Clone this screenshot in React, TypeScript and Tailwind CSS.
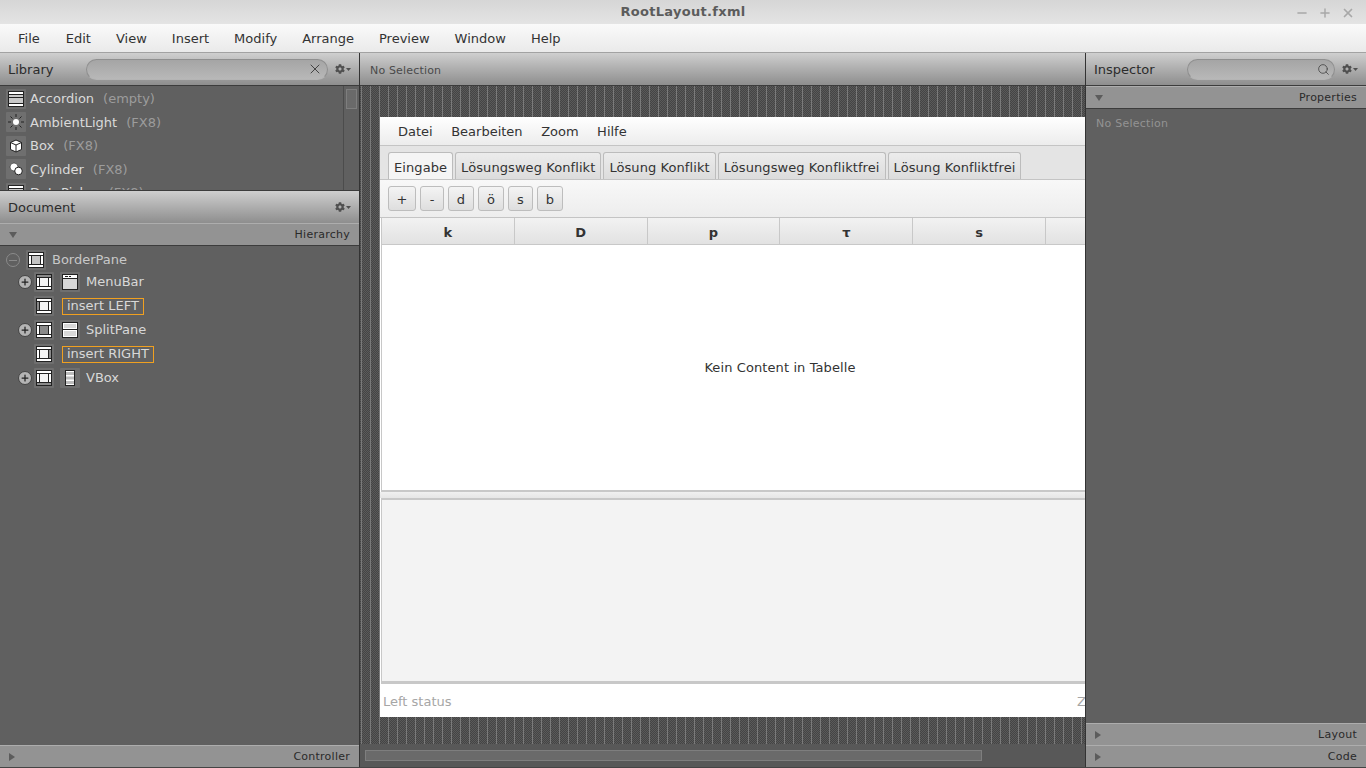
import { Minus, Plus, Search, X } from 'lucide-react';
import { FaCog } from 'react-icons/fa';
import type { ReactNode } from 'react';

const headerBg = 'bg-gradient-to-b from-[#cfcfcf] to-[#8e8e8e]';

function Gear() {
    return (
        <div className="flex items-center gap-[1px] text-[#505050]">
            <FaCog size={10} />
            <svg width="5" height="3" viewBox="0 0 5 3"><path d="M0 0h5L2.500 3z" fill="#505050" /></svg>
        </div>
    );
}

function Caret({ open }: { open?: boolean }) {
    return open ? (
        <svg width="8" height="6" viewBox="0 0 8 6"><path d="M0 0h8L4 6z" fill="#5c5c5c" /></svg>
    ) : (
        <svg width="6" height="8" viewBox="0 0 6 8"><path d="M0 0v8l6-4z" fill="#5c5c5c" /></svg>
    );
}

function SectionBar({ label, open }: { label: string; open?: boolean }) {
    return (
        <div className="h-[22px] shrink-0 flex items-center justify-between pl-[9px] pr-[9px] pt-[1px] bg-[#939393] border-t border-[#adadad] text-[11px] tracking-[0.25px] text-[#2a2a2a]">
            <Caret open={open} />
            <span>{label}</span>
        </div>
    );
}

function IconBox({ children }: { children: ReactNode }) {
    return <div className="w-[20px] h-[20px] shrink-0 flex items-center justify-center bg-[#6f6f6f] rounded-[1px]">{children}</div>;
}

// the little BorderPane glyph, one region is greyed depending on position
function BorderIcon({ active }: { active?: 'top' | 'left' | 'center' | 'right' | 'bottom' | 'all' }) {
    const grey = '#8a8a8a';
    return (
        <svg width="16" height="16" viewBox="0 0 16 16">
            <rect x="0.500" y="0.500" width="15" height="15" fill="#fff" stroke="#222" />
            {active === 'top' && <rect x="1" y="1" width="14" height="2" fill={grey} />}
            {active === 'bottom' && <rect x="1" y="13" width="14" height="2" fill={grey} />}
            {active === 'left' && <rect x="1" y="4" width="2" height="8" fill={grey} />}
            {active === 'right' && <rect x="13" y="4" width="2" height="8" fill={grey} />}
            <rect x="4" y="4" width="8" height="8" fill={active === 'center' ? grey : active === 'all' ? '#c4c4c4' : '#f4f4f4'} />
            <path d="M1 3.500h14M1 12.500h14M3.500 4v8M12.500 4v8" stroke="#222" />
        </svg>
    );
}

function AccordionIcon() {
    return (
        <svg width="16" height="16" viewBox="0 0 16 16">
            <rect x="0.500" y="0.500" width="15" height="15" fill="#fff" stroke="#222" />
            <rect x="1" y="4" width="14" height="8" fill="#c8c8c8" />
            <path d="M1 3.500h14M1 6.500h14M1 12.500h14" stroke="#222" />
        </svg>
    );
}

function LightIcon() {
    return (
        <svg width="16" height="16" viewBox="0 0 16 16">
            <circle cx="8" cy="8" r="3" fill="#fff" />
            <path d="M8 0v3M8 13v3M0 8h3M13 8h3M2.500 2.500l2 2M11.500 11.500l2 2M2.500 13.500l2-2M11.500 4.500l2-2" stroke="#222" />
        </svg>
    );
}

function BoxIcon() {
    return (
        <svg width="14" height="14" viewBox="0 0 14 14">
            <path d="M7 1l5.500 2.500v7L7 13l-5.500-2.500v-7z" fill="#fff" stroke="#222" />
            <path d="M1.500 3.500L7 6l5.500-2.500M7 6v7" fill="none" stroke="#222" />
        </svg>
    );
}

function CylinderIcon() {
    return (
        <svg width="14" height="14" viewBox="0 0 14 14">
            <circle cx="5" cy="5" r="4" fill="#fff" stroke="#222" strokeWidth="0.600" />
            <circle cx="9.500" cy="9" r="3.800" fill="#fff" stroke="#222" />
        </svg>
    );
}

function MenuBarIcon() {
    return (
        <svg width="16" height="16" viewBox="0 0 16 16">
            <rect x="0.500" y="0.500" width="15" height="15" fill="#d8d8d8" stroke="#222" />
            <rect x="1" y="1" width="14" height="3" fill="#fff" />
            <path d="M1 4.500h14M3 2.500h3M7 2.500h2" stroke="#222" />
        </svg>
    );
}

function SplitPaneIcon() {
    return (
        <svg width="16" height="16" viewBox="0 0 16 16">
            <rect x="0.500" y="0.500" width="15" height="15" fill="#fff" stroke="#222" />
            <rect x="2" y="2" width="12" height="4" fill="#d8d8d8" />
            <rect x="2" y="9" width="12" height="5" fill="#d8d8d8" />
            <path d="M1 7.500h14" stroke="#222" />
        </svg>
    );
}

function VBoxIcon() {
    return (
        <svg width="10" height="16" viewBox="0 0 10 16">
            <rect x="0.500" y="0.500" width="9" height="15" fill="#fff" stroke="#222" />
            <rect x="1" y="2" width="8" height="3" fill="#bdbdbd" />
            <rect x="1" y="6.500" width="8" height="3" fill="#bdbdbd" />
            <rect x="1" y="11" width="8" height="3" fill="#bdbdbd" />
        </svg>
    );
}

function Expander({ open }: { open?: boolean }) {
    if (open) {
        return (
            <div className="w-[14px] h-[14px] shrink-0 rounded-full border border-[#8a8a8a] flex items-center justify-center">
                <div className="w-[8px] h-[1px] bg-[#8a8a8a]" />
            </div>
        );
    }
    return (
        <div className="w-[14px] h-[14px] shrink-0 rounded-full bg-[#b4b4b4] border border-[#444] flex items-center justify-center text-[#222]">
            <Plus size={10} strokeWidth={3} />
        </div>
    );
}

const libraryItems: { name: string; note: string; icon: ReactNode }[] = [
    { name: 'Accordion', note: '(empty)', icon: <AccordionIcon /> },
    { name: 'AmbientLight', note: '(FX8)', icon: <LightIcon /> },
    { name: 'Box', note: '(FX8)', icon: <BoxIcon /> },
    { name: 'Cylinder', note: '(FX8)', icon: <CylinderIcon /> },
    { name: 'DatePicker', note: '(FX8)', icon: <AccordionIcon /> },
];

function LeftPanel() {
    return (
        <div className="w-[359px] shrink-0 flex flex-col bg-[#606060]">
            <div className={`h-[33px] shrink-0 flex items-center pl-[8px] pr-[8px] ${headerBg} border-b border-[#3c3c3c] text-[13px] text-[#2c2c2c]`}>
                <span className="w-[78px] pt-[2px]">Library</span>
                <div className="w-[243px] h-[21px] rounded-full border border-[#8f8f8f] border-b-[#b5b5b5] bg-gradient-to-b from-[#a5a5a5] to-[#b8b8b8] flex items-center justify-end pr-[4px] text-[#444]">
                    <X size={16} strokeWidth={1.500} />
                </div>
                <div className="ml-[7px]"><Gear /></div>
            </div>
            <div className="h-[104px] shrink-0 flex overflow-hidden">
                <div className="flex-1 pt-[1px] pl-[6px]">
                    {libraryItems.map((item) => (
                        <div key={item.name} className="h-[23.500px] flex items-center gap-[4px] text-[13px] text-[#dadada] whitespace-nowrap">
                            <IconBox>{item.icon}</IconBox>
                            <span>{item.name}</span>
                            <span className="ml-[5px] text-[#9c9c9c]">{item.note}</span>
                        </div>
                    ))}
                </div>
                <div className="w-[16px] shrink-0 border-l border-[#4c4c4c] pt-[3px] pl-[2px]">
                    <div className="w-[11px] h-[20px] border border-[#7e7e7e] bg-[#6a6a6a]" />
                </div>
            </div>
            <div className={`h-[33px] shrink-0 flex items-center justify-between pl-[8px] pr-[8px] ${headerBg} border-t border-[#3c3c3c] text-[13px] text-[#2c2c2c]`}>
                <span className="pt-[2px]">Document</span>
                <Gear />
            </div>
            <SectionBar label="Hierarchy" open />
            <div className="flex-1 flex flex-col pt-[4px] pl-[6px] border-t border-[#3c3c3c] text-[13px] text-[#d8d8d8]">
                <div className="h-[20px] flex items-center">
                    <Expander open />
                    <div className="ml-[6px]"><IconBox><BorderIcon active="all" /></IconBox></div>
                    <span className="ml-[6px] text-[#c8c8c8]">BorderPane</span>
                </div>
                <div className="h-[24px] flex items-center pl-[12px]">
                    <Expander />
                    <div className="ml-[2px]"><IconBox><BorderIcon active="top" /></IconBox></div>
                    <div className="ml-[6px]"><IconBox><MenuBarIcon /></IconBox></div>
                    <span className="ml-[6px]">MenuBar</span>
                </div>
                <div className="h-[24px] flex items-center pl-[28px]">
                    <IconBox><BorderIcon active="left" /></IconBox>
                    <span className="ml-[8px] h-[17px] px-[4px] flex items-center border border-[#f0a020]">insert LEFT</span>
                </div>
                <div className="h-[24px] flex items-center pl-[12px]">
                    <Expander />
                    <div className="ml-[2px]"><IconBox><BorderIcon active="center" /></IconBox></div>
                    <div className="ml-[6px]"><IconBox><SplitPaneIcon /></IconBox></div>
                    <span className="ml-[6px]">SplitPane</span>
                </div>
                <div className="h-[24px] flex items-center pl-[28px]">
                    <IconBox><BorderIcon active="right" /></IconBox>
                    <span className="ml-[8px] h-[17px] px-[4px] flex items-center border border-[#f0a020]">insert RIGHT</span>
                </div>
                <div className="h-[24px] flex items-center pl-[12px]">
                    <Expander />
                    <div className="ml-[2px]"><IconBox><BorderIcon active="bottom" /></IconBox></div>
                    <div className="ml-[6px]"><IconBox><VBoxIcon /></IconBox></div>
                    <span className="ml-[6px]">VBox</span>
                </div>
            </div>
            <SectionBar label="Controller" />
        </div>
    );
}

function RightPanel() {
    return (
        <div className="w-[281px] shrink-0 flex flex-col bg-[#606060] border-l border-[#333]">
            <div className={`h-[33px] shrink-0 flex items-center pl-[8px] pr-[8px] ${headerBg} border-b border-[#3c3c3c] text-[13px] text-[#2c2c2c]`}>
                <span className="w-[93px] pt-[2px]">Inspector</span>
                <div className="w-[148px] h-[21px] rounded-full border border-[#8f8f8f] border-b-[#b5b5b5] bg-gradient-to-b from-[#a5a5a5] to-[#b8b8b8] flex items-center justify-end pr-[4px] text-[#444]">
                    <Search size={13} strokeWidth={1.500} />
                </div>
                <div className="ml-[7px]"><Gear /></div>
            </div>
            <SectionBar label="Properties" open />
            <div className="flex-1 pl-[10px] pt-[7px] border-t border-[#3c3c3c] text-[11px] tracking-[0.25px] text-[#939393]">No Selection</div>
            <SectionBar label="Layout" />
            <SectionBar label="Code" />
        </div>
    );
}

const columns = ['k', 'D', 'p', 'τ', 's'];
const tabs = ['Eingabe', 'Lösungsweg Konflikt', 'Lösung Konflikt', 'Lösungsweg Konfliktfrei', 'Lösung Konfliktfrei'];
const buttons = [
    { label: '+', width: 'w-[28px]' },
    { label: '-', width: 'w-[24px]' },
    { label: 'd', width: 'w-[26px]' },
    { label: 'ö', width: 'w-[26px]' },
    { label: 's', width: 'w-[25px]' },
    { label: 'b', width: 'w-[26px]' },
];

function DesignedApp() {
    return (
        <div className="w-[800px] h-[600px] shrink-0 flex flex-col bg-white text-[13px] text-[#333]">
            <div className="h-[29px] shrink-0 flex items-center gap-[18.500px] pl-[18px] pt-[1px] bg-gradient-to-b from-white to-[#ececec] border-b border-[#c4c4c4]">
                <span>Datei</span>
                <span>Bearbeiten</span>
                <span>Zoom</span>
                <span>Hilfe</span>
            </div>
            <div className="h-[34px] shrink-0 flex items-end gap-[2px] pl-[8px] bg-[#e4e4e4] border-b border-[#c4c4c4]">
                {tabs.map((tab, i) => (
                    <div
                        key={tab}
                        className={`h-[27px] px-[5px] pt-[3px] flex items-center rounded-t-[3px] border border-b-0 border-[#bcbcbc] whitespace-nowrap tracking-[0.08px] ${i === 0 ? 'bg-[#f5f5f5]' : 'bg-gradient-to-b from-[#ececec] to-[#dcdcdc]'}`}
                    >
                        {tab}
                    </div>
                ))}
            </div>
            <div className="h-[38px] shrink-0 flex items-center gap-[4px] pl-[8px] bg-gradient-to-b from-[#f8f8f8] to-[#ededed] border-b border-[#c4c4c4]">
                {buttons.map((b) => (
                    <div key={b.label} className={`h-[25px] ${b.width} pt-[2px] flex items-center justify-center rounded-[3px] border border-[#bdbdbd] bg-gradient-to-b from-[#f4f4f4] to-[#dedede]`}>
                        {b.label}
                    </div>
                ))}
            </div>
            <div className="h-[274px] shrink-0 flex flex-col ml-[1px] border-l border-[#c8c8c8] border-b-2 border-b-[#c8c8c8]">
                <div className="h-[27px] shrink-0 flex bg-gradient-to-b from-[#f2f2f2] to-[#e2e2e2] border-b border-[#c8c8c8] font-bold">
                    {columns.map((c) => (
                        <div key={c} className="w-[132.800px] shrink-0 flex items-center justify-center pt-[4px] border-r border-[#c8c8c8]">{c}</div>
                    ))}
                </div>
                <div className="flex-1 flex items-center justify-center pr-[2px] tracking-[0.1px]">Kein Content in Tabelle</div>
            </div>
            <div className="h-[6px] shrink-0 bg-gradient-to-b from-[#f0f0f0] to-[#e6e6e6]" />
            <div className="h-[186px] shrink-0 ml-[1px] border-l border-[#c8c8c8] border-t-2 border-t-[#c8c8c8] border-b-[3px] border-b-[#c8c8c8] bg-[#f3f3f3]" />
            <div className="flex-1 flex items-center pl-[3px] pt-[2px] text-[#a6a6a6]">
                <span className="w-[694px] shrink-0">Left status</span>
                <span>Zoom</span>
            </div>
        </div>
    );
}

function CenterPanel() {
    return (
        <div className="flex-1 min-w-0 flex flex-col border-l border-[#333]">
            <div className={`h-[33px] shrink-0 flex items-center pl-[10px] pt-[4px] ${headerBg} border-b border-[#3c3c3c] text-[11px] tracking-[0.17px] text-[#4a4a4a]`}>
                No Selection
            </div>
            <div className="flex-1 min-h-0 overflow-hidden pl-[20px] pt-[31px] bg-[#4d4d4d] bg-[linear-gradient(90deg,#7a7a7a_1px,transparent_1px),repeating-conic-gradient(#444444_0_25%,#5a5a5a_0_50%)] bg-[length:9px_100%,2px_2px] bg-[position:1px_0,0_0]">
                <DesignedApp />
            </div>
            <div className="h-[23px] shrink-0 flex items-center pl-[5px] bg-[#585858]">
                <div className="w-[617px] h-[11px] border border-[#7e7e7e] bg-[#6a6a6a]" />
            </div>
        </div>
    );
}

export default function App() {
    const menus = ['File', 'Edit', 'View', 'Insert', 'Modify', 'Arrange', 'Preview', 'Window', 'Help'];
    return (
        <div className="w-[1366px] h-[768px] flex flex-col overflow-hidden font-['DejaVu_Sans',sans-serif]">
            <div className="h-[24px] shrink-0 flex items-center justify-center relative bg-gradient-to-b from-[#d6d6d6] to-[#e4e4e4] text-[13px] font-bold tracking-[0.3px] text-[#5c5c5c]">
                RootLayout.fxml
                <div className="absolute right-[11px] top-[6px] flex gap-[9px] text-[#a8a8a8]">
                    <Minus size={14} strokeWidth={2.500} />
                    <Plus size={14} strokeWidth={2.500} />
                    <X size={14} strokeWidth={3} />
                </div>
            </div>
            <div className="h-[29px] shrink-0 flex items-center gap-[25px] pl-[18px] pt-[1px] bg-gradient-to-b from-[#fafafa] to-[#eaeaea] border-b border-[#a2a2a2] text-[13px] text-[#333]">
                {menus.map((m, i) => (
                    <span key={m} className={i === 0 ? 'mr-[1px]' : ''}>{m}</span>
                ))}
            </div>
            <div className="flex-1 min-h-0 flex border-b border-[#444]">
                <LeftPanel />
                <CenterPanel />
                <RightPanel />
            </div>
        </div>
    );
}
